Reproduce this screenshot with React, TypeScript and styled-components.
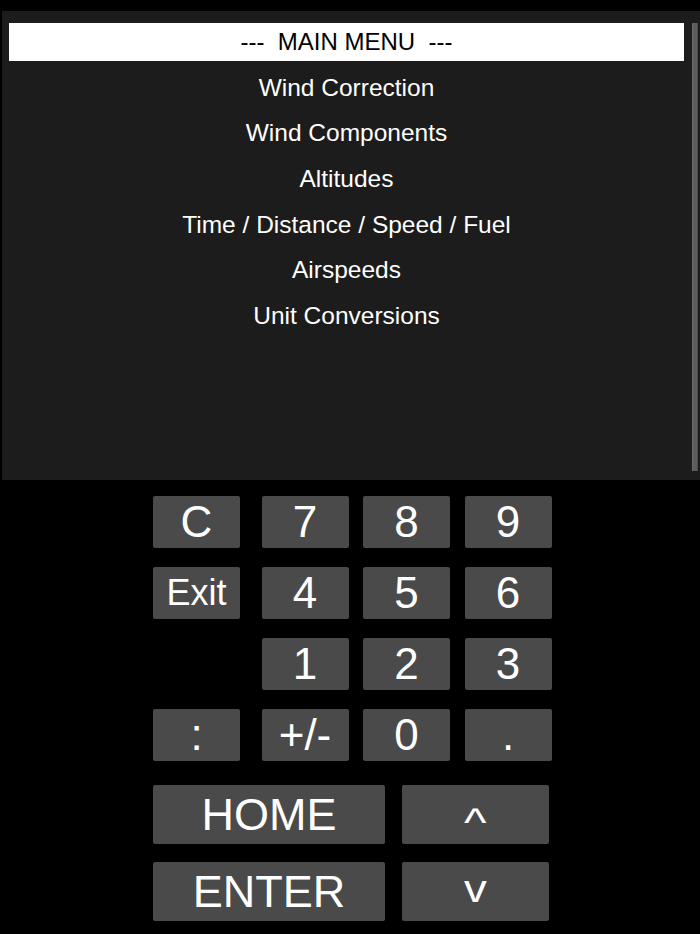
import React from "react";
import styled, { createGlobalStyle } from "styled-components";

const Global = createGlobalStyle`
  html, body { margin: 0; padding: 0; background: #000; }
  body { font-family: "Liberation Sans", Arial, sans-serif; }
  * { box-sizing: border-box; }
`;

const Page = styled.div`
  width: 700px;
  height: 934px;
  background: #000;
  padding: 11px 0 0 2px;
  display: flex;
  flex-direction: column;
  overflow: hidden;
`;

const Screen = styled.div`
  height: 469px;
  background: #1c1c1c;
  display: flex;
  padding: 12px 2px 9px 7px;
  gap: 8px;
`;

const MenuColumn = styled.div`
  flex: 1;
  display: flex;
  flex-direction: column;
`;

const Header = styled.div`
  height: 38px;
  background: #fff;
  color: #000;
  display: flex;
  align-items: center;
  justify-content: center;
  font-size: 24px;
  white-space: pre;
  margin-bottom: 4px;
`;

const MenuItem = styled.div`
  height: 45.6px;
  display: flex;
  align-items: center;
  justify-content: center;
  color: #fff;
  font-size: 24.5px;
`;

const ScrollTrack = styled.div`
  width: 6px;
  background: #5c5c5c;
  border-left: 1px solid #6a6a6a;
  border-right: 1px solid #4a4a4a;
`;

const Keypad = styled.div`
  margin: 16px 0 0 151px;
  width: 398px;
  display: grid;
  grid-template-columns: 94px 87px 87px 87px;
  grid-auto-rows: 52px;
  column-gap: 14.5px;
  row-gap: 19px;
`;

const Key = styled.div<{ $size?: number; $empty?: boolean }>`
  width: 87px;
  height: 52px;
  background: ${(p) => (p.$empty ? "transparent" : "#4a4a4a")};
  border-radius: 2px;
  color: #fff;
  font-size: ${(p) => p.$size ?? 44}px;
  display: flex;
  align-items: center;
  justify-content: center;
  line-height: 1;
`;

const NavGrid = styled.div`
  margin: 24px 0 0 151px;
  display: grid;
  grid-template-columns: 232px 147px;
  grid-auto-rows: 59px;
  column-gap: 17px;
  row-gap: 18px;
`;

const BigKey = styled.div`
  background: #4a4a4a;
  border-radius: 2px;
  color: #fff;
  font-size: 45px;
  display: flex;
  align-items: center;
  justify-content: center;
  line-height: 1;
`;

const Glyph = styled.span<{ $shift: number; $size: number }>`
  display: inline-block;
  font-size: ${(p) => p.$size}px;
  transform: translateY(${(p) => p.$shift}px) scaleX(1.2);
`;

const menu = [
  "Wind Correction",
  "Wind Components",
  "Altitudes",
  "Time / Distance / Speed / Fuel",
  "Airspeeds",
  "Unit Conversions",
];

const keys: { label: string; size?: number; empty?: boolean }[] = [
  { label: "C" }, { label: "7" }, { label: "8" }, { label: "9" },
  { label: "Exit", size: 36 }, { label: "4" }, { label: "5" }, { label: "6" },
  { label: "", empty: true }, { label: "1" }, { label: "2" }, { label: "3" },
  { label: ":" }, { label: "+/-" }, { label: "0" }, { label: "." },
];

export default function App() {
  return (
    <>
      <Global />
      <Page>
        <Screen>
          <MenuColumn>
            <Header>{"---  MAIN MENU  ---"}</Header>
            {menu.map((m) => (
              <MenuItem key={m}>{m}</MenuItem>
            ))}
          </MenuColumn>
          <ScrollTrack />
        </Screen>
        <Keypad>
          {keys.map((k, i) => (
            <Key key={i} $size={k.size} $empty={k.empty}>
              {k.label}
            </Key>
          ))}
        </Keypad>
        <NavGrid>
          <BigKey>HOME</BigKey>
          <BigKey>
            <Glyph $size={40} $shift={7}>^</Glyph>
          </BigKey>
          <BigKey>ENTER</BigKey>
          <BigKey>
            <Glyph $size={38} $shift={-3}>v</Glyph>
          </BigKey>
        </NavGrid>
      </Page>
    </>
  );
}
